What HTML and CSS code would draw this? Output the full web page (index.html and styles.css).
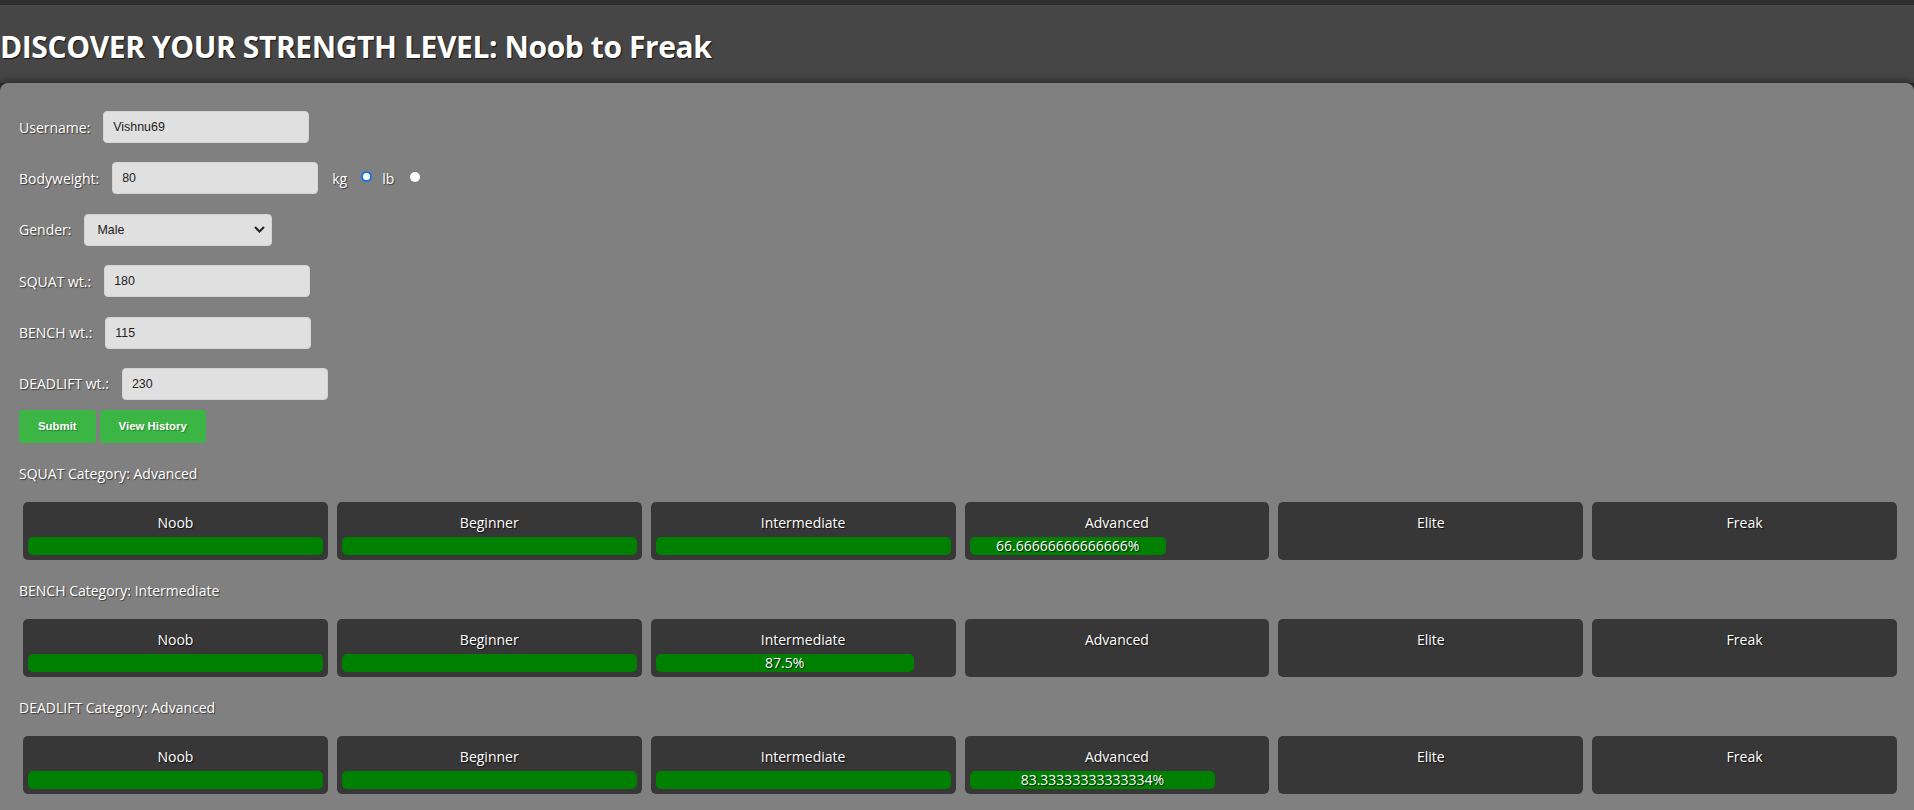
FILE: index.html
```html
<!DOCTYPE html>
<html lang="en">
<head>
<meta charset="utf-8">
<title>Strength Level</title>
<link rel="stylesheet" href="styles.css">
</head>
<body>
<header class="topbar">
  <h1 class="title">DISCOVER YOUR STRENGTH LEVEL: Noob to Freak</h1>
</header>
<main class="panel">
  <form class="form">
    <div class="field">
      <label class="label">Username:</label>
      <input class="text-input" type="text" value="Vishnu69">
    </div>
    <div class="field">
      <label class="label">Bodyweight:</label>
      <input class="text-input" type="text" value="80">
      <span class="unit unit-kg">kg</span>
      <span class="radio radio-on"></span>
      <span class="unit unit-lb">lb</span>
      <span class="radio radio-off"></span>
    </div>
    <div class="field">
      <label class="label">Gender:</label>
      <div class="select-wrap">
        <select class="select"><option>Male</option><option>Female</option></select>
        <svg class="chevron" width="11" height="7" viewBox="0 0 11 7"><path d="M1 1l4.5 4.5L10 1" fill="none" stroke="#222" stroke-width="2"/></svg>
      </div>
    </div>
    <div class="field">
      <label class="label">SQUAT wt.:</label>
      <input class="text-input" type="text" value="180">
    </div>
    <div class="field">
      <label class="label">BENCH wt.:</label>
      <input class="text-input" type="text" value="115">
    </div>
    <div class="field field-last">
      <label class="label">DEADLIFT wt.:</label>
      <input class="text-input" type="text" value="230">
    </div>
    <div class="actions">
      <button type="button" class="btn">Submit</button>
      <button type="button" class="btn">View History</button>
    </div>
  </form>

  <section class="lift">
    <p class="lift-label">SQUAT Category: Advanced</p>
    <div class="levels">
      <div class="level"><div class="level-name">Noob</div><div class="track"><div class="bar" style="width:100%"></div></div></div>
      <div class="level"><div class="level-name">Beginner</div><div class="track"><div class="bar" style="width:100%"></div></div></div>
      <div class="level"><div class="level-name">Intermediate</div><div class="track"><div class="bar" style="width:100%"></div></div></div>
      <div class="level"><div class="level-name">Advanced</div><div class="track"><div class="bar" style="width:66.66666666666666%">66.66666666666666%</div></div></div>
      <div class="level"><div class="level-name">Elite</div><div class="track"></div></div>
      <div class="level"><div class="level-name">Freak</div><div class="track"></div></div>
    </div>
  </section>

  <section class="lift">
    <p class="lift-label">BENCH Category: Intermediate</p>
    <div class="levels">
      <div class="level"><div class="level-name">Noob</div><div class="track"><div class="bar" style="width:100%"></div></div></div>
      <div class="level"><div class="level-name">Beginner</div><div class="track"><div class="bar" style="width:100%"></div></div></div>
      <div class="level"><div class="level-name">Intermediate</div><div class="track"><div class="bar" style="width:87.5%">87.5%</div></div></div>
      <div class="level"><div class="level-name">Advanced</div><div class="track"></div></div>
      <div class="level"><div class="level-name">Elite</div><div class="track"></div></div>
      <div class="level"><div class="level-name">Freak</div><div class="track"></div></div>
    </div>
  </section>

  <section class="lift">
    <p class="lift-label">DEADLIFT Category: Advanced</p>
    <div class="levels">
      <div class="level"><div class="level-name">Noob</div><div class="track"><div class="bar" style="width:100%"></div></div></div>
      <div class="level"><div class="level-name">Beginner</div><div class="track"><div class="bar" style="width:100%"></div></div></div>
      <div class="level"><div class="level-name">Intermediate</div><div class="track"><div class="bar" style="width:100%"></div></div></div>
      <div class="level"><div class="level-name">Advanced</div><div class="track"><div class="bar" style="width:83.33333333333334%">83.33333333333334%</div></div></div>
      <div class="level"><div class="level-name">Elite</div><div class="track"></div></div>
      <div class="level"><div class="level-name">Freak</div><div class="track"></div></div>
    </div>
  </section>
</main>
</body>
</html>
```
FILE: styles.css
```css
html, body {
  margin: 0;
  padding: 0;
  height: 100%;
}

body {
  display: flex;
  flex-direction: column;
  box-sizing: border-box;
  background: #2e2e2e;
  padding-top: 5px;
  font-family: "Open Sans", "Noto Sans", sans-serif;
  color: #fff;
}

.topbar {
  flex: none;
  background: #464646;
  height: 78px;
  box-sizing: border-box;
  padding-top: 21px;
}

.title {
  margin: 0;
  font-size: 30px;
  font-weight: 700;
  line-height: 41px;
  letter-spacing: -0.4px;
  color: #fff;
  text-shadow: 1px 1px 1px rgba(0, 0, 0, 0.7);
}

.panel {
  flex: 1;
  display: block;
  background: #808080;
  border-radius: 8px 8px 0 0;
  padding: 28px 17px 0 19px;
  box-shadow: 0 -3px 8px rgba(0, 0, 0, 0.35);
}

.form {
  margin: 0;
}

.field {
  display: flex;
  align-items: center;
  height: 32px;
  margin-bottom: 19.4px;
}

.field-last {
  margin-bottom: 10px;
}

.label {
  font-size: 14px;
  color: #fff;
  text-shadow: 1px 1px 1px rgba(0, 0, 0, 0.55);
  margin-right: 13px;
}

.text-input {
  box-sizing: border-box;
  width: 206px;
  height: 32px;
  border: 1px solid #d4d4d4;
  border-radius: 4px;
  background: #e0e0e0;
  padding: 0 9px;
  font-family: "Liberation Sans", Arial, sans-serif;
  font-size: 12.4px;
  color: #222;
  outline: none;
}

.unit {
  font-size: 14px;
  color: #fff;
  text-shadow: 1px 1px 1px rgba(0, 0, 0, 0.55);
}

.unit-kg {
  margin-left: 14px;
  margin-right: 14px;
}

.unit-lb {
  margin-left: 10px;
  margin-right: 16px;
}

.radio {
  display: inline-block;
  box-sizing: border-box;
  width: 10px;
  height: 10px;
  border-radius: 50%;
  background: #fff;
  margin-top: -3px;
}

.radio-on {
  border: 2px solid #1a73e8;
  width: 11px;
  height: 11px;
}

.select-wrap {
  position: relative;
  width: 188px;
  height: 32px;
}

.select {
  box-sizing: border-box;
  width: 188px;
  height: 32px;
  appearance: none;
  -webkit-appearance: none;
  border: 1px solid #d4d4d4;
  border-radius: 4px;
  background: #e0e0e0;
  padding: 0 12px;
  font-family: "Liberation Sans", Arial, sans-serif;
  font-size: 12.4px;
  color: #222;
  outline: none;
}

.chevron {
  position: absolute;
  right: 7px;
  top: 12px;
  pointer-events: none;
}

.actions {
  display: flex;
  gap: 4px;
  margin-bottom: 21px;
}

.btn {
  height: 33px;
  padding: 0 19px;
  border: none;
  border-radius: 4px;
  background: #3bb543;
  color: #fff;
  font-family: "Liberation Sans", Arial, sans-serif;
  font-size: 11.4px;
  font-weight: 700;
  text-shadow: 1px 1px 1px rgba(0, 0, 0, 0.3);
  cursor: pointer;
}

.lift-label {
  margin: 0 0 19px;
  font-size: 14px;
  line-height: 19px;
  color: #fff;
  text-shadow: 1px 1px 1px rgba(0, 0, 0, 0.55);
}

.levels {
  display: grid;
  grid-template-columns: repeat(6, 1fr);
  gap: 9px;
  margin: 0 0 21px 4px;
}

.lift:last-child .levels {
  margin-bottom: 0;
}

.level {
  background: #373737;
  border-radius: 5px;
  padding: 5px;
  height: 58px;
  box-sizing: border-box;
}

.level-name {
  padding-top: 6px;
  margin-bottom: 4px;
  line-height: 20px;
  font-size: 14px;
  text-align: center;
  color: #fff;
  text-shadow: 1px 1px 1px rgba(0, 0, 0, 0.7);
}

.track {
  height: 18px;
}

.bar {
  height: 18px;
  background: #008000;
  border-radius: 5px;
  font-size: 14px;
  line-height: 18px;
  text-align: center;
  color: #fff;
  text-shadow: 1px 1px 1px rgba(0, 0, 0, 0.8);
  white-space: nowrap;
}
```
